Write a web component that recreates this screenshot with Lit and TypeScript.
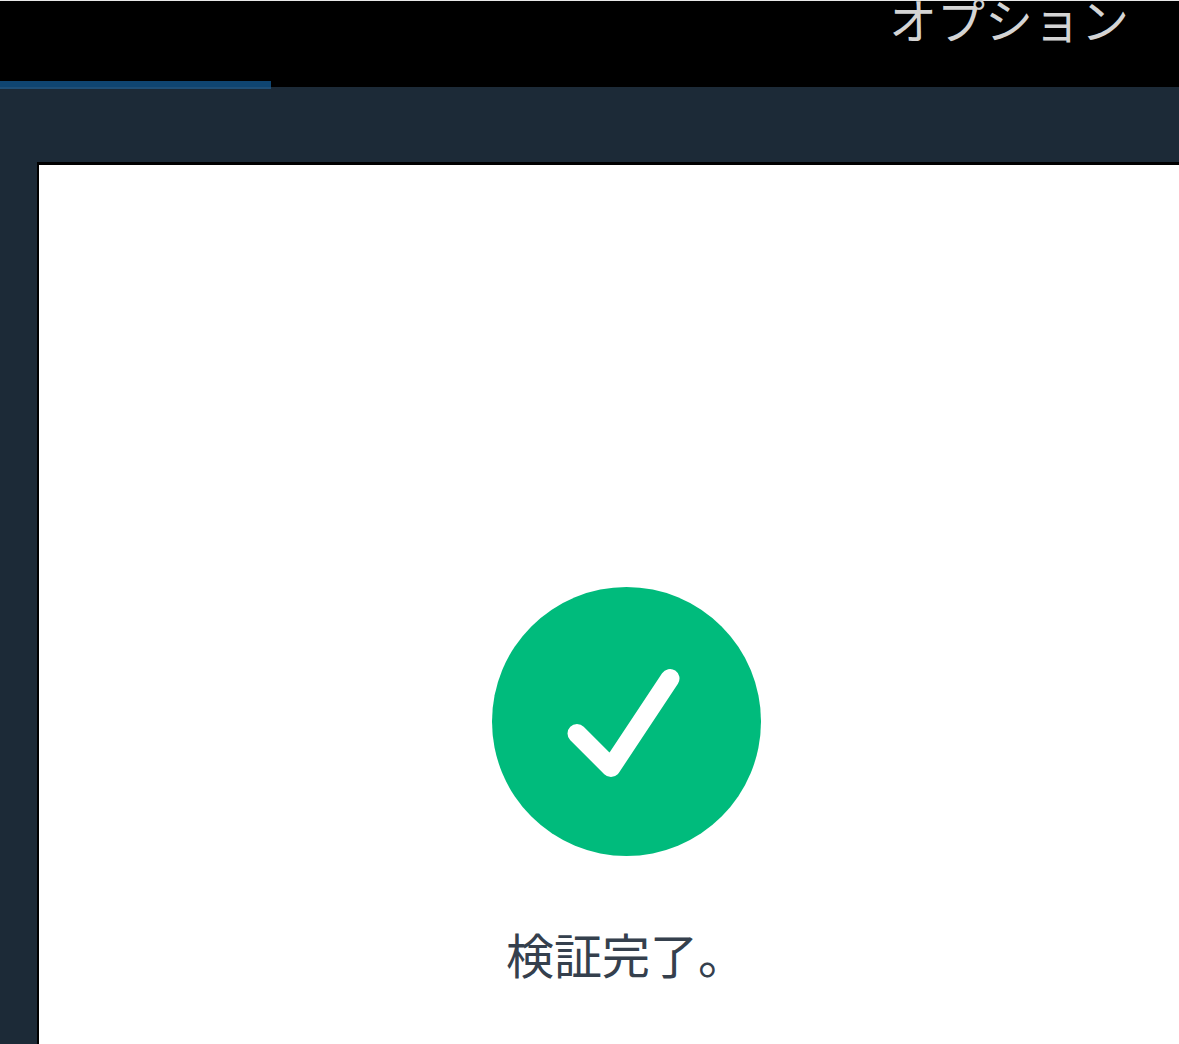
import { LitElement, html, css } from "lit";
import { customElement } from "lit/decorators.js";

@customElement("app-root")
export class AppRoot extends LitElement {
  static styles = css`
    :host {
      display: block;
      width: 1179px;
      height: 1044px;
      overflow: hidden;
      background: #1c2a37;
      font-family: "Noto Sans CJK JP", "Liberation Sans", sans-serif;
    }
    .header {
      position: relative;
      box-sizing: border-box;
      height: 87px;
      background: #000;
      border-top: 1px solid #e8e8e8;
      display: flex;
      justify-content: flex-end;
      align-items: flex-start;
      padding-right: 50px;
    }
    .option {
      color: #d4d4d4;
      font-size: 48px;
      font-weight: 400;
      line-height: 48px;
      margin-top: -7px;
      white-space: nowrap;
    }
    .progress {
      position: absolute;
      left: 0;
      top: 80px;
      width: 271px;
      height: 8px;
      box-sizing: border-box;
      background: #0f4571;
      border-bottom: 2px solid #1f4f77;
    }
    .body {
      padding: 75px 0 0 37px;
    }
    .panel {
      box-sizing: border-box;
      width: 1176px;
      height: 900px;
      background: #fff;
      border-top: 3px solid #000;
      border-left: 2px solid #000;
      display: flex;
      flex-direction: column;
      align-items: center;
      padding-top: 422px;
    }
    .circle {
      width: 269px;
      height: 269px;
      display: block;
    }
    .message {
      margin-top: 64px;
      color: #35404d;
      font-size: 48px;
      font-weight: 400;
      line-height: 66px;
      white-space: nowrap;
    }
  `;

  render() {
    return html`
      <div class="header">
        <span class="option">オプション</span>
        <div class="progress"></div>
      </div>
      <div class="body">
        <div class="panel">
          <svg class="circle" viewBox="0 0 269 269" aria-hidden="true">
            <circle cx="134.5" cy="134.5" r="134.5" fill="#00bb7c"></circle>
            <path
              d="M85 146.5 L119 180.5 L178 91.5"
              fill="none"
              stroke="#fff"
              stroke-width="19"
              stroke-linecap="round"
              stroke-linejoin="round"
            ></path>
          </svg>
          <div class="message">検証完了。</div>
        </div>
      </div>
    `;
  }
}
